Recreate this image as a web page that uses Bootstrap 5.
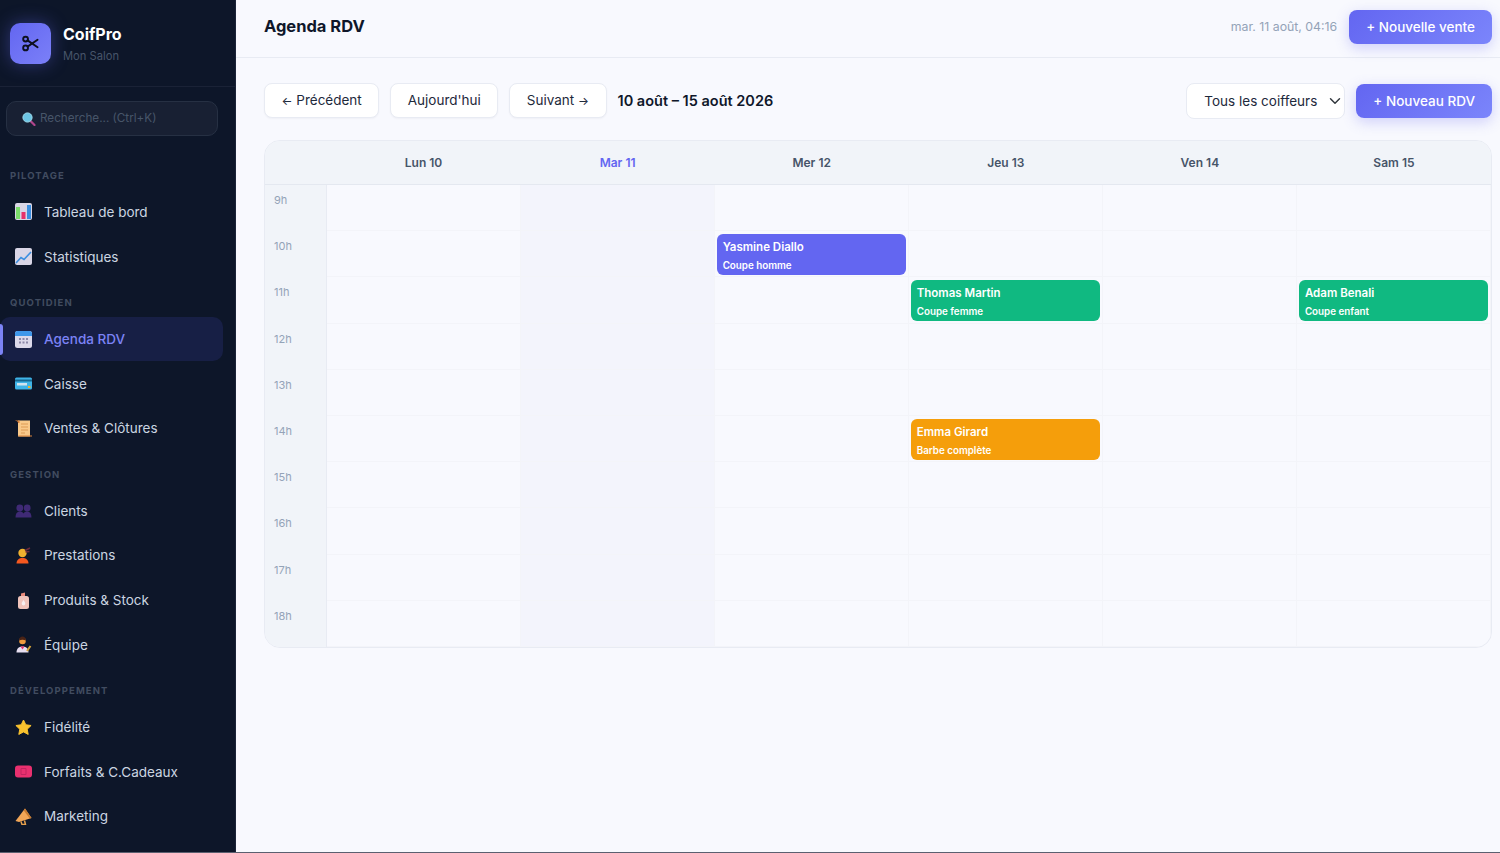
<!DOCTYPE html>
<html lang="fr">
<head>
  <meta charset="UTF-8" />
  <meta name="viewport" content="width=device-width, initial-scale=1.0" />
  <title>Agenda RDV | CoifPro</title>
  <link href="https://cdn.jsdelivr.net/npm/bootstrap@5.3.0/dist/css/bootstrap.min.css" rel="stylesheet">
  <style>
    html, body { height: 100%; }
    body {
      background: #f8f9fe;
      color: #0f172a;
      font-family: Inter, "Liberation Sans", sans-serif;
      overflow: hidden;
    }
    .app-shell { height: 853px; border-bottom: 1px solid #5b6070; }

    /* sidebar */
    .side {
      width: 236px;
      flex: none;
      background: #0d1629;
      border-right: 1px solid #1c2438;
      overflow: hidden;
    }
    .side-brand {
      height: 87px;
      padding: 23px 10px 0;
      gap: 12px;
      border-bottom: 1px solid #1a2236;
    }
    .brand-logo {
      width: 41px;
      height: 41px;
      border-radius: 10px;
      background: linear-gradient(135deg, #6366f1, #7b80f8);
      box-shadow: 0 0 18px rgba(99, 102, 241, .4);
    }
    .brand-name { font-size: 16px; font-weight: 700; color: #fff; line-height: 20px; margin-top: 1px; }
    .brand-sub { font-size: 11.2px; color: #475569; line-height: 15px; margin-top: 5px; }
    .side-search {
      margin: 14px 17px 0 6px;
      height: 35px;
      padding-left: 15px;
      gap: 4px;
      background: #182033;
      border: 1px solid #263043;
      border-radius: 10px;
      font-size: 11.7px;
      color: #475569;
    }
    .side-label {
      height: 37.7px;
      padding: 17px 10px 0;
      font-size: 9.5px;
      line-height: 14px;
      font-weight: 700;
      letter-spacing: 1.1px;
      text-transform: uppercase;
      color: #414c60;
    }
    .side-label.is-first { height: 53.6px; padding-top: 33px; }
    .side-link {
      position: relative;
      height: 44.7px;
      margin-right: 12px;
      padding-left: 15px;
      gap: 12px;
      font-size: 13.5px;
      color: #cbd5e1;
      border-radius: 10px;
      text-decoration: none;
    }
    .side-link.is-active { background: #171f45; color: #7c83f5; font-weight: 500; }
    .side-link.is-active::before {
      content: "";
      position: absolute;
      left: 0;
      top: 7px;
      bottom: 6px;
      width: 3px;
      border-radius: 0 3px 3px 0;
      background: #7c83f5;
    }
    .side-link svg { width: 17px; height: 17px; flex: none; }

    /* topbar */
    .top-bar {
      height: 58px;
      padding: 0 8px 3px 28px;
      border-bottom: 1px solid #e8ebf3;
    }
    .top-title { font-size: 16.5px; font-weight: 700; margin: 0; color: #0f172a; }
    .top-date { font-size: 12.3px; color: #94a3b8; margin-right: 12px; }
    .btn-violet {
      height: 34px;
      padding: 0 17px;
      border: 0;
      border-radius: 8px;
      background: linear-gradient(135deg, #6366f1, #7b85fb);
      color: #fff;
      font-size: 13.5px;
      font-weight: 500;
      box-shadow: 0 4px 14px rgba(99, 102, 241, .28);
    }
    .btn-violet:hover { color: #fff; background: #6366f1; }

    /* toolbar */
    .tool-bar { padding: 25px 8px 0 28px; height: 82px; gap: 11px; }
    .btn-plain {
      height: 35px;
      padding: 0 16.5px;
      background: #fff;
      border: 1px solid #e8ebf3;
      border-radius: 8px;
      color: #1e293b;
      font-size: 13.5px;
      font-weight: 400;
      box-shadow: 0 1px 2px rgba(15, 23, 42, .04);
    }
    .btn-arrow { font-size: 11.5px; }
    .week-range { font-size: 14.5px; font-weight: 600; color: #0f172a; }
    .coif-select {
      width: 159px;
      height: 36px;
      padding: 0 26px 0 17px;
      border: 1px solid #e8ebf3;
      border-radius: 8px;
      font-size: 13.5px;
      color: #1e293b;
      background-position: right 1px center;
    }

    /* planning */
    .plan-wrap { margin: 0 8px 0 28px; }
    .plan-grid {
      display: grid;
      grid-template-columns: 61.5px repeat(6, 1fr);
      grid-template-rows: 44px repeat(10, 46.2px);
      border: 1px solid #e8ebf3;
      border-radius: 16px;
      overflow: hidden;
      background: #f8f9fe;
    }
    .plan-head {
      display: flex;
      align-items: center;
      justify-content: center;
      background: #f1f4f9;
      border-bottom: 1px solid #e4e8f0;
      font-size: 12px;
      font-weight: 600;
      color: #475569;
    }
    .plan-head.is-today { color: #6366f1; }
    .plan-hour {
      background: #f1f4f9;
      border-right: 1px solid #e8ebf3;
      padding: 8px 0 0 9px;
      font-size: 11px;
      line-height: 15px;
      color: #94a3b8;
    }
    .plan-cell {
      position: relative;
      border-right: 1px solid #f3f4f9;
      border-bottom: 1px solid #f3f4f9;
    }
    .plan-cell.is-today { background: #f3f4fc; }
    .plan-event {
      position: absolute;
      left: 2px;
      right: 2px;
      top: 3px;
      height: 41px;
      padding: 6px 6px 0;
      border-radius: 6px;
      color: #fff;
      z-index: 1;
    }
    .plan-event b { display: block; font-size: 11.5px; line-height: 15px; font-weight: 600; }
    .plan-event span { display: block; font-size: 9.8px; line-height: 13px; font-weight: 600; margin-top: 4px; }
    .ev-violet { background: #6366f1; }
    .ev-green { background: #10b981; }
    .ev-orange { background: #f59e0b; }
  </style>
</head>
<body>
  <div class="app-shell d-flex">
    <!-- Sidebar -->
    <aside class="side">
      <div class="side-brand d-flex align-items-start">
        <div class="brand-logo d-flex align-items-center justify-content-center">
          <svg width="17" height="17" viewBox="0 0 19 19" fill="none" stroke="#0d1020" stroke-width="2.100" stroke-linecap="round">
            <circle cx="4" cy="4.600" r="2.700"/><circle cx="4" cy="14.400" r="2.700"/>
            <path d="M6.200 6 17.400 13.600M6.200 13 17.400 5.400"/>
          </svg>
        </div>
        <div>
          <div class="brand-name">CoifPro</div>
          <div class="brand-sub">Mon Salon</div>
        </div>
      </div>
      <div class="side-search d-flex align-items-center">
        <svg width="14" height="14" viewBox="0 0 14 14"><path d="M8 8.500 12.500 13" stroke="#b0458c" stroke-width="2.200" stroke-linecap="round"/><circle cx="5.500" cy="5.500" r="4.600" fill="#6cc5e4" stroke="#9fdcee"/></svg>
        <span>Recherche... (Ctrl+K)</span>
      </div>

      <nav>
        <div class="side-label is-first">Pilotage</div>
        <a class="side-link d-flex align-items-center" href="#">
          <svg viewBox="0 0 17 17"><rect width="17" height="17" rx="2" fill="#d9d6e6"/><rect x="1" y="4" width="4" height="12" fill="#7bdc6a"/><rect x="6.500" y="9" width="4" height="7" fill="#e8316b"/><rect x="12" y="2" width="4" height="14" fill="#3b8fe0"/></svg>
          Tableau de bord
        </a>
        <a class="side-link d-flex align-items-center" href="#">
          <svg viewBox="0 0 17 17"><rect width="17" height="17" rx="2" fill="#d9d6e6"/><path d="M1 15 6 9.500l3 2L16 4" fill="none" stroke="#3b8fe0" stroke-width="1.600"/></svg>
          Statistiques
        </a>

        <div class="side-label">Quotidien</div>
        <a class="side-link is-active d-flex align-items-center" href="#">
          <svg viewBox="0 0 17 17"><rect width="17" height="17" rx="2.500" fill="#dcd9ea"/><path d="M0 5V2.500A2.500 2.500 0 0 1 2.500 0h12A2.500 2.500 0 0 1 17 2.500V5z" fill="#3f97ea"/><path d="M4 7h2v2H4zm3.500 0h2v2h-2zm3.500 0h2v2h-2zM4 10.500h2v2H4zm3.500 0h2v2h-2zm3.500 0h2v2h-2z" fill="#8c88a8"/></svg>
          Agenda RDV
        </a>
        <a class="side-link d-flex align-items-center" href="#">
          <svg viewBox="0 0 17 17"><rect y="2.500" width="17" height="12" rx="1.500" fill="#3fb4e8"/><rect y="4.500" width="17" height="2" fill="#16688f"/><rect x="2" y="8" width="10" height="2.500" fill="#cfe3ee"/><rect x="13" y="11" width="2.500" height="2" fill="#f0b429"/></svg>
          Caisse
        </a>
        <a class="side-link d-flex align-items-center" href="#">
          <svg viewBox="0 0 17 17"><rect x="3" y=".5" width="12" height="16" fill="#f9c98a"/><path d="M.5.500H4.500V3H3C3 1.500 2 1 .5 1z" fill="#d9813a"/><path d="M3 15.500h14v1H4z" fill="#d9813a"/><path d="M6 4h7M6 7h7M6 10h7M6 13h4" stroke="#dd9a55"/></svg>
          Ventes &amp; Clôtures
        </a>

        <div class="side-label">Gestion</div>
        <a class="side-link d-flex align-items-center" href="#">
          <svg viewBox="0 0 17 17" fill="#3f2a75"><circle cx="4.800" cy="6" r="3.400"/><circle cx="12.200" cy="6" r="3.400"/><path d="M.5 15.500c0-4 1.500-6 4.300-6 1.500 0 2.800.6 3.700 2 .9-1.400 2.200-2 3.700-2 2.800 0 4.300 2 4.300 6z"/></svg>
          Clients
        </a>
        <a class="side-link d-flex align-items-center" href="#">
          <svg viewBox="0 0 17 17"><path d="M1.500 16.500c0-3.500 2.500-5.500 6-5.500s6 2 6 5.500z" fill="#f4581f"/><circle cx="7.500" cy="6" r="4.200" fill="#efb12f"/><path d="M10 3.500 15 1M10.500 5l4-.5" stroke="#6b2a3c" stroke-width="1.400"/></svg>
          Prestations
        </a>
        <a class="side-link d-flex align-items-center" href="#">
          <svg viewBox="0 0 17 17"><rect x="3" y="4" width="11" height="13" rx="2.500" fill="#f0c4bb"/><path d="M6 4V1.500L10 .5v3.500z" fill="#e88a7a"/><path d="M8.500 8c1 1.500 1.800 2.500 1.800 3.700a1.800 1.800 0 0 1-3.600 0C6.700 10.500 7.500 9.500 8.500 8z" fill="#f7eff0"/></svg>
          Produits &amp; Stock
        </a>
        <a class="side-link d-flex align-items-center" href="#">
          <svg viewBox="0 0 17 17"><path d="M1.500 16.500c0-4 2.500-6 6-6s6 2 6 6z" fill="#e6def0"/><path d="M5.500 10.500h4l-2 3z" fill="#e8316b"/><circle cx="7.500" cy="5" r="3.300" fill="#ef9a3c"/><path d="M4 4.500C4 1.500 6 .5 7.500.5S11 1.500 11 4.500C9 3.500 6 3.500 4 4.500z" fill="#4a2316"/><path d="m12 15 3.500-5" stroke="#d9a63a" stroke-width="2"/></svg>
          Équipe
        </a>

        <div class="side-label">Développement</div>
        <a class="side-link d-flex align-items-center" href="#">
          <svg viewBox="0 0 17 17"><path d="m8.500 1 2.300 4.800 5.300.7-3.900 3.700 1 5.200-4.700-2.500-4.700 2.500 1-5.200L.9 6.500l5.300-.7z" fill="#f9c22e" stroke="#f9c22e" stroke-linejoin="round"/></svg>
          Fidélité
        </a>
        <a class="side-link d-flex align-items-center" href="#">
          <svg viewBox="0 0 17 17"><rect y="2.500" width="17" height="12" rx="3" fill="#e9306f"/><path d="M6 5.500h5v6H6z" fill="none" stroke="#c22560"/></svg>
          Forfaits &amp; C.Cadeaux
        </a>
        <a class="side-link d-flex align-items-center" href="#">
          <svg viewBox="0 0 17 17"><path d="M10 .5 16.500 10 4 14 .5 13z" fill="#f2a657"/><path d="M10 .5l6.500 9.500-1.800.6L8.600 2.300z" fill="#c77a30"/><path d="m6 13.500 1 3h3.500l-1-4" fill="none" stroke="#e6a04c" stroke-width="1.500"/></svg>
          Marketing
        </a>
      </nav>
    </aside>

    <!-- Main -->
    <main class="flex-grow-1 d-flex flex-column" style="min-width:0">
      <header class="top-bar d-flex align-items-center justify-content-between">
        <h1 class="top-title">Agenda RDV</h1>
        <div class="d-flex align-items-center">
          <span class="top-date">mar. 11 août, 04:16</span>
          <button class="btn btn-violet">+ Nouvelle vente</button>
        </div>
      </header>

      <div class="tool-bar d-flex align-items-start justify-content-between">
        <div class="d-flex align-items-center" style="gap:11px">
          <button class="btn btn-plain"><span class="btn-arrow">←</span> Précédent</button>
          <button class="btn btn-plain">Aujourd'hui</button>
          <button class="btn btn-plain">Suivant <span class="btn-arrow">→</span></button>
          <span class="week-range">10 août – 15 août 2026</span>
        </div>
        <div class="d-flex align-items-center" style="gap:11px">
          <select class="form-select coif-select"><option>Tous les coiffeurs</option></select>
          <button class="btn btn-violet">+ Nouveau RDV</button>
        </div>
      </div>

      <div class="plan-wrap">
        <div class="plan-grid" id="planGrid"></div>
      </div>
    </main>
  </div>

  <script>
    const days = ['Lun 10', 'Mar 11', 'Mer 12', 'Jeu 13', 'Ven 14', 'Sam 15'];
    const events = {
      '10-2': ['Yasmine Diallo', 'Coupe homme', 'ev-violet'],
      '11-3': ['Thomas Martin', 'Coupe femme', 'ev-green'],
      '11-5': ['Adam Benali', 'Coupe enfant', 'ev-green'],
      '14-3': ['Emma Girard', 'Barbe complète', 'ev-orange']
    };
    let html = '<div class="plan-head"></div>';
    days.forEach((d, i) => {
      html += `<div class="plan-head ${i === 1 ? 'is-today' : ''}">${d}</div>`;
    });
    for (let h = 9; h <= 18; h++) {
      html += `<div class="plan-hour">${h}h</div>`;
      days.forEach((d, i) => {
        const ev = events[h + '-' + i];
        html += `<div class="plan-cell ${i === 1 ? 'is-today' : ''}">`;
        if (ev) html += `<div class="plan-event ${ev[2]}"><b>${ev[0]}</b><span>${ev[1]}</span></div>`;
        html += '</div>';
      });
    }
    document.getElementById('planGrid').innerHTML = html;
  </script>
  <script src="https://cdn.jsdelivr.net/npm/bootstrap@5.3.0/dist/js/bootstrap.bundle.min.js"></script>
</body>
</html>
